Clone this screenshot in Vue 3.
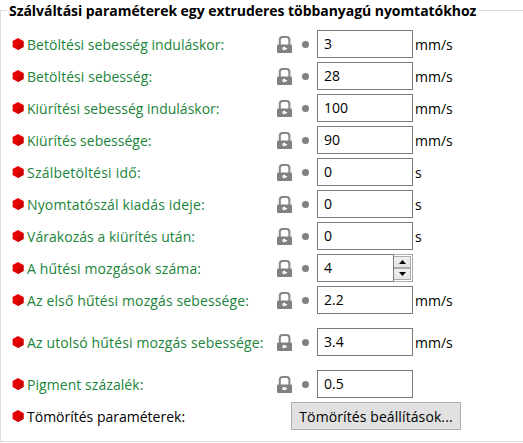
<script setup>
const rows = [
  { label: 'Betöltési sebesség induláskor:', value: '3', unit: 'mm/s', tracking: 0.03 },
  { label: 'Betöltési sebesség:', value: '28', unit: 'mm/s', tracking: 0.06 },
  { label: 'Kiürítési sebesség induláskor:', value: '100', unit: 'mm/s', tracking: 0 },
  { label: 'Kiürítés sebessége:', value: '90', unit: 'mm/s', tracking: 0 },
  { label: 'Szálbetöltési idő:', value: '0', unit: 's', tracking: 0.22 },
  { label: 'Nyomtatószál kiadás ideje:', value: '0', unit: 's', tracking: 0.16 },
  { label: 'Várakozás a kiürítés után:', value: '0', unit: 's', tracking: 0.04 },
  { label: 'A hűtési mozgások száma:', value: '4', spin: true, tracking: 0.12 },
  { label: 'Az első hűtési mozgás sebessége:', value: '2.2', unit: 'mm/s', tracking: 0.13 },
  { label: 'Az utolsó hűtési mozgás sebessége:', value: '3.4', unit: 'mm/s', tall: true, tracking: 0.13 },
  { label: 'Pigment százalék:', value: '0.5', tracking: 0.06 },
  { label: 'Tömörítés paraméterek:', button: 'Tömörítés beállítások...', tracking: 0 },
]
</script>

<template>
  <section class="group">
    <header class="head">
      <i class="rule start"></i>
      <h2>Szálváltási paraméterek egy extruderes többanyagú nyomtatókhoz</h2>
      <i class="rule"></i>
    </header>
    <div class="rows">
      <div v-for="row in rows" :key="row.label" class="row" :class="{ tall: row.tall }">
        <svg class="hex" width="12" height="12" viewBox="0 0 12 12">
          <path d="M6 0 11.5 3V9L6 12 .6 9V3Z" fill="#e60000" />
          <path d="M11.5 3V9L6 12 5.2 8Z" fill="#cc0000" />
        </svg>
        <span class="label" :class="{ plain: row.button }" :style="{ letterSpacing: row.tracking + 'px' }">{{ row.label }}</span>
        <button v-if="row.button" class="button">{{ row.button }}</button>
        <template v-else>
          <svg class="lock" width="16" height="18" viewBox="0 0 16 18">
            <path d="M2.8 10V4.8Q2.8 2 5.6 2H9.6Q12.4 2 12.4 4.8V10" fill="none" stroke="#858585" stroke-width="2" />
            <rect x="0" y="9.4" width="15" height="8.6" rx="1" fill="#808080" />
            <path d="M5.2 13.6a1.8 1.8 0 0 1 3.3-.9L10 13v1.2l-1.5.3a1.8 1.8 0 0 1-3.3-.9Z" fill="#fff" />
            <circle cx="6.9" cy="13.6" r=".5" fill="#aaa" />
          </svg>
          <i class="dot"></i>
          <div class="field" :class="{ spin: row.spin }">
            <span class="value">{{ row.value }}</span>
            <span v-if="row.spin" class="spinner">
              <span class="step"><svg width="7" height="4" viewBox="0 0 7 4"><path d="M0 4 3.5 0 7 4Z" /></svg></span>
              <span class="step"><svg width="7" height="4" viewBox="0 0 7 4"><path d="M0 0 3.5 4 7 0Z" /></svg></span>
            </span>
          </div>
          <span class="unit">{{ row.unit }}</span>
        </template>
      </div>
    </div>
  </section>
</template>

<style>
body { margin: 0; background: #fff; overflow: hidden; }
</style>

<style scoped>
.group {
  box-sizing: border-box;
  width: 523px;
  height: 443px;
  font-family: "Open Sans", "Noto Sans", sans-serif;
  font-size: 14px;
  line-height: 20px;
  color: #000;
  white-space: nowrap;
}
.head { display: flex; height: 20px; }
h2 { margin: 0 1px 0 2px; flex: none; width: 468px; font-size: 14px; font-weight: 700; line-height: 21px; letter-spacing: -0.05px; }
.rule { flex: 1; height: 1px; margin-top: 10px; background: #dcdcdc; }
.rule.start { flex: none; width: 7px; box-sizing: border-box; height: 10px; background: none; border: solid #dcdcdc; border-width: 1px 0 0 1px; }
.rows {
  box-sizing: border-box;
  height: 422px;
  padding: 10px 0 0 11px;
  display: flex;
  flex-direction: column;
  gap: 4px;
  border: solid #dcdcdc;
  border-width: 0 0 1px 1px;
}
.row { display: flex; align-items: center; height: 28px; }
.row.tall { margin: 10px 0; }
.hex { flex: none; }
.label { width: 250px; padding-left: 3px; box-sizing: border-box; padding-top: 2px; color: #1b843b; flex: none; }
.label.plain { color: #000; width: 267px; }
.lock { flex: none; margin: 0 0 0 3px; }
.dot { width: 7px; height: 7px; border-radius: 50%; background: #808080; margin: 1px 8px 0 9px; flex: none; }
.field { box-sizing: border-box; width: 96px; height: 28px; border: 1px solid #7a7a7a; display: flex; flex: none; }
.value { flex: 1; padding-left: 6px; line-height: 26px; }
.unit { padding: 2px 0 0 2px; }
.field.spin { border-right-color: #abadb3; }
.spinner { box-sizing: border-box; width: 19px; height: 28px; margin-top: -1px; border: 1px solid #abadb3; border-left-color: #7a7a7a; border-right: 0; padding: 1px 1px 1px 0; display: flex; flex-direction: column; flex: none; }
.step { flex: 1; box-sizing: border-box; border: 1px solid #acacac; border-left: 0; background: linear-gradient(#f0f0f0, #e5e5e5); display: flex; align-items: center; justify-content: center; }
.button { width: 170px; height: 28px; box-sizing: border-box; padding: 1px 0 0; margin: 0; border: 1px solid #adadad; background: #e1e1e1; color: #000; font: inherit; letter-spacing: 0.1px; }
</style>
